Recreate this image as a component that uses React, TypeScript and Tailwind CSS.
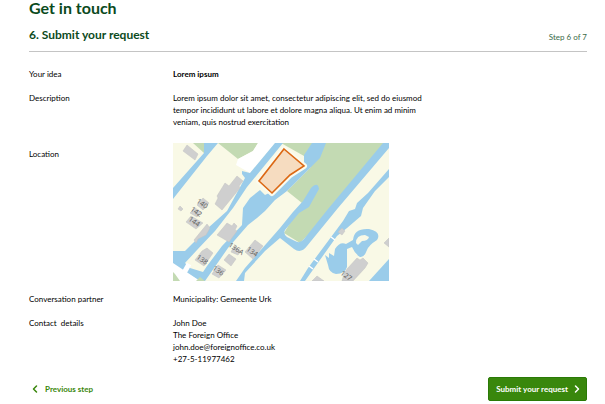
import { ChevronLeft, ChevronRight } from 'lucide-react';

const buildings = [
  '14,2 25,11 22,17 10,8',
  '52,40 56,43 64,33 70,38 66,43 67,45 49,67 42,61 45,55 44,53',
  '7,63 10,66 8,68 5,66',
  '30,55 36,60 30,67 24,62',
  '22,65 28,69 24,74 17,70',
  '18,73 30,80 23,86 13,79',
  '34,81 37,85 33,92 25,96 23,100 21,97',
  '54,80 59,83 61,80 64,83 62,87 64,88 56,99 44,92',
  '34,105 40,110 31,123 22,117 29,108',
  '45,122 53,127 46,135 39,131',
  '61,103 68,108 65,112 58,109',
  '56,111 63,116 58,123 51,117',
  '82,97 90,103 80,116 72,109',
  '169,85 172,88 169,92 165,89',
  '184,115 187,117 190,115 195,120 192,125 180,138 169,138 171,131 174,126',
  '144,133 151,138 139,138',
  '216,95 211,100 216,104',
];

const houseNumbers = [
  { label: '140', x: 29, y: 61 },
  { label: '142', x: 23, y: 69 },
  { label: '144', x: 21, y: 79 },
  { label: '138', x: 29, y: 117 },
  { label: '136', x: 45, y: 128 },
  { label: '136A', x: 63, y: 106 },
  { label: '134', x: 79, y: 109 },
  { label: '127', x: 173, y: 133 },
];

const LocationMap = () => {
  return (
    <svg
      viewBox="0 0 216 138"
      role="img"
      aria-label="Map of the selected location"
      className="w-[216px] max-w-full"
    >
      <rect width="216" height="138" fill="#f9f9e6" />

      {/* fields */}
      <g fill="#c3dab3">
        <path d="M20 0H32L31 10Z" />
        <path d="M45 0H85L80 8L65 16Z" />
        <path d="M108 0H140L131 13Z" />
        <path d="M152 0H212L154 72L127 100L111 90L129 60L114 48L137 25Z" />
      </g>
      <path d="M85 0H102L77 30L63 22L65 16L80 8Z" fill="#fff" />

      {/* canals */}
      <g fill="#9accea">
        <path d="M31 0H45L34 13L0 56V45L31 10Z" />
        <path d="M102 0H110L74 44L60 65L42 88L24 107L12 120L17 125L30 129L34 123L49 103L69 82L70 65L77 55L87 47L92 52L102 47L117 34L131 23L131 12L139 0H153L147 15L137 25L114 48L102 57L92 68L84 75L75 82L55 105L39 128L32 138H27L0 122V108L12 108L20 100L35 85L54 68L72 35L69 31V28L77 30Z" />
        <path d="M210 0H216V5L165 65L134 103Q128 111 121 106L107 95L92 108L72 130L71 138H63L72 125L107 85L120 69L130 58L138 45Q145 38 146 46L136 64L126 70L112 87Q110 91 114 94L122 98Q127 101 131 96L155 66Z" />
        <path d="M216 26V34L202 48L190 65L188 73L174 85L164 93L132 138H127L135 125L170 78L176 68L182 66L184 60L195 50Z" />
        <path d="M152 112L156 115V110L161 113L162 106Q167 98 173 101L180 97Q181 85 196 86Q209 89 204 97Q196 102 194 107Q191 115 187 114Q182 111 179 104L174 106V124Q172 131 163 131Q156 130 155 122Z" />
        <path d="M216 116V138H196Z" />
      </g>
      <path d="M183 100Q183 92 192 92L196 94Q195 98 189 98L185 102Z" fill="#f9f9e6" />

      {/* road and bridges */}
      <path d="M0 120L27 138H0Z" fill="#fff" />
      <path d="M2 131L0 129V138H7ZM23 138L27 134L32 138Z" fill="#c3dab3" />
      <path d="M11 130L16 121" stroke="#fff" strokeWidth="5" />
      <path d="M158 94L162 97M141 116L145 119M136 123L140 126" stroke="#fff" strokeWidth="1.5" />

      <g fill="#cfcfcf" stroke="#c2c2c2" strokeWidth="0.5">
        {buildings.map((points) => (
          <polygon key={points} points={points} />
        ))}
      </g>

      <g fill="#666" fontSize="7" textAnchor="middle" className="font-['Noto_Sans',sans-serif]">
        {houseNumbers.map(({ label, x, y }) => (
          <text key={label} x={x} y={y} dy="2" transform={`rotate(35 ${x} ${y})`}>
            {label}
          </text>
        ))}
      </g>

      {/* selected plot */}
      <path
        d="M111 6L131 23L117 32L99 50L86 38Z"
        fill="#f9f9e6"
        stroke="#fbfbee"
        strokeWidth="6"
        strokeLinejoin="round"
      />
      <path d="M111 6L131 23L117 32L99 50L86 38Z" fill="#f6dcc0" stroke="#dc6814" strokeWidth="1.6" />
    </svg>
  );
};

const App = () => {
  return (
    <main className="pl-[29px] pr-[18px] text-[8px] leading-3 text-black font-['Lato',sans-serif]">
      <h1 className="text-[16px] leading-4 font-bold text-[#0b4a1c]">Get in touch</h1>

      <div className="flex items-end justify-between mt-[11px] pb-2 border-b border-[#c4c4c4]">
        <h2 className="text-[12px] leading-4 font-bold text-[#0b4a1c]">6. Submit your request</h2>
        <p className="text-[#3b6b48]">Step 6 of 7</p>
      </div>

      <dl className="grid grid-cols-[144px_1fr] gap-y-3 mt-4">
        <dt>Your idea</dt>
        <dd className="font-bold">Lorem ipsum</dd>
        <dt>Description</dt>
        <dd className="max-w-[260px]">
          Lorem ipsum dolor sit amet, consectetur adipiscing elit, sed do eiusmod tempor incididunt
          ut labore et dolore magna aliqua. Ut enim ad minim veniam, quis nostrud exercitation
        </dd>
        <dt className="mt-2">Location</dt>
        <dd className="mt-[3px]">
          <LocationMap />
        </dd>
        <dt>Conversation partner</dt>
        <dd>Municipality: Gemeente Urk</dd>
        <dt>Contact&nbsp; details</dt>
        <dd>
          John Doe
          <br />
          The Foreign Office
          <br />
          john.doe@foreignoffice.co.uk
          <br />
          +27-5-11977462
        </dd>
      </dl>

      <div className="flex items-center justify-between mt-3 font-bold">
        <a href="#previous" className="flex items-center gap-1 text-[#39870c]">
          <ChevronLeft size={12} strokeWidth={3} />
          Previous step
        </a>
        <button
          type="button"
          className="flex items-center gap-[3px] h-6 pl-[7px] pr-[3px] rounded-xs border border-[#2a7a06] bg-[#39870c] text-white"
        >
          Submit your request
          <ChevronRight size={12} strokeWidth={3} />
        </button>
      </div>
    </main>
  );
};

export default App;
